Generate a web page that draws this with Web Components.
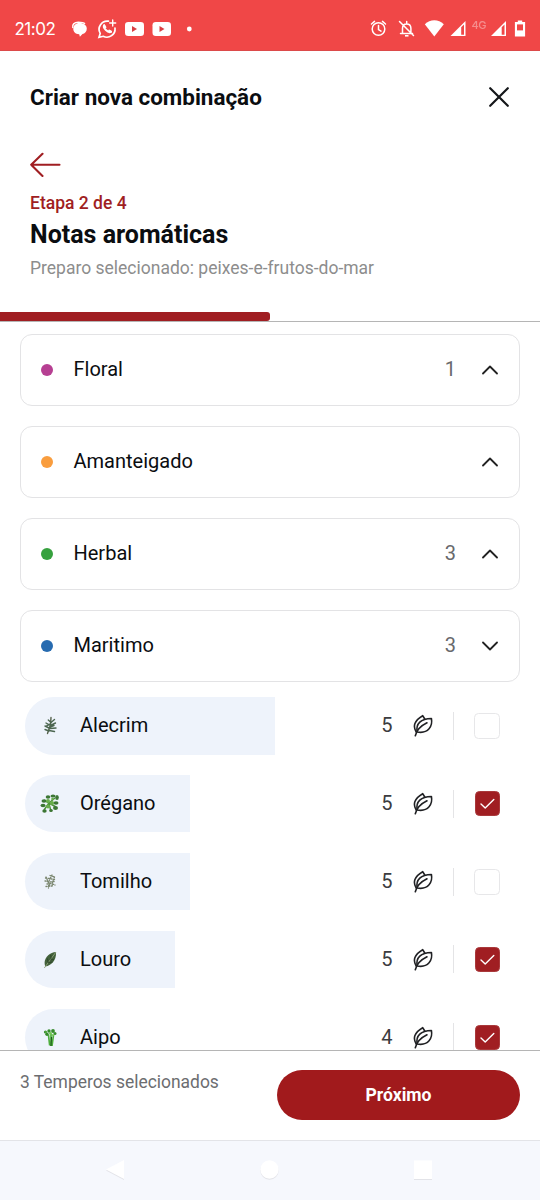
<!DOCTYPE html>
<html lang="pt-BR">
<head>
<meta charset="utf-8">
<title>Criar nova combinação</title>
<style>
html,body{margin:0;height:100%;overflow:hidden;background:#fff;font-family:Roboto,"Liberation Sans",sans-serif;color:#0b0d10}
</style>
</head>
<body>
<combo-app></combo-app>
<script>
const define = (name, html) => customElements.define(name, class extends HTMLElement {
  constructor() {
    super();
    const t = document.createElement('template');
    t.innerHTML = typeof html === 'function' ? html(this) : html;
    this.attachShadow({ mode: 'open' }).append(t.content.cloneNode(true));
  }
});

define('status-bar', `
<style>
:host{display:flex;height:51px;flex:none;box-sizing:border-box;background:#f04747;color:#fff;border-bottom:1px solid #dc4a4a}
svg{display:block;width:540px;height:50px}
.time{font:17px Inter,Roboto,sans-serif;letter-spacing:-.3px}
.net{font:500 11px Inter,Roboto,sans-serif;opacity:.38}
</style>
<svg viewBox="0 0 540 50" fill="#fff">
  <text class="time" x="14.5" y="35" textLength="41">21:02</text>
  <path d="M79.500 23c4.300 0 7.300 2.400 7.300 5.600s-2 5.100-4.300 5.500l-2.600 2.600-.7-2.500c-4-.2-5.900-2.800-5.900-5.300 0-3.400 2.400-5.900 6.200-5.900z"/><path d="M72.800 28c-1-3.400 1.500-5.700 5.500-5.700 3.500 0 5.500.4 6.700 1.500" fill="none" stroke="#fff" stroke-width="1.500"/>
  <g fill="none" stroke="#fff" stroke-width="1.7" stroke-linecap="round">
    <path d="M108.500 21.200a8.200 8.200 0 0 0-8.300 12.200l-1.200 4 4.200-1.100a8.200 8.200 0 0 0 11.800-8.300"/>
    <path d="M112.700 20v6M109.700 23h6" stroke-width="1.400"/>
    <path d="M104.200 25.300c-1.700 2.200 3.900 8.300 6.800 6.400" stroke-width="2"/>
    <path d="M104.200 25.300l1.200 2M109.200 30.500l1.800 1.200" stroke-width="2"/>
  </g>
  <rect x="125" y="22" width="19" height="14" rx="3.300"/><path d="M132 26v6l5-3z" fill="#d93f43"/>
  <rect x="152.500" y="22" width="18.500" height="14" rx="3.300"/><path d="M159.500 26v6l5-3z" fill="#d93f43"/>
  <circle cx="189.300" cy="29" r="2.400"/>
  <g fill="none" stroke="#fff" stroke-width="1.500" stroke-linecap="round">
    <circle cx="378.500" cy="29" r="6.300"/><path d="M378.500 25.500v4l2.500 1.700M371.500 24l3-2.600M385.500 24l-3-2.600"/>
    <path d="M402.500 33.300v-5c0-2.500 1.700-4.400 4.200-4.400s4.200 1.900 4.200 4.400v5M400.500 33.500h12M406.700 21.500v2M399.500 21.500l14 14" />
  </g><path d="M405 35h3.500v1.600H405z"/>
  <path d="M434.300 36.500L424.800 24.200c2.700-2.600 6-3.900 9.500-3.900s6.800 1.300 9.500 3.900z"/>
  <path d="M465.500 21v15H450.500z"/><path d="M461.200 27.300l2.800-2.800V34.700h-2.800z" fill="#f04747"/>
  <text class="net" x="471.500" y="29" textLength="15">4G</text>
  <path d="M506 21v15H491z"/><path d="M501.700 27.300l2.800-2.800V34.700h-2.800z" fill="#f04747"/>
  <path d="M517.800 20.500h4.400V22h2.900v14.500h-10.200V22h2.900z"/><path d="M517 24.400h6v6h-6z" fill="#f04747"/>
</svg>`);

define('combo-header', `
<style>
:host{display:block;flex:none;height:270px;box-sizing:border-box;padding:31px 30px 0}
.top{display:flex;justify-content:space-between;align-items:center;height:30px}
h1,h2,p{margin:0;white-space:nowrap}
h1{font-size:22.450px;line-height:30px;font-weight:700}
.close{margin-right:1px}
svg{display:block;fill:none}
.back{margin:40px 0 0}
.step{margin-top:14px;font-size:17.500px;line-height:22px;font-weight:500;color:#a01e22}
h2{margin-top:5px;font-size:25px;line-height:32px;font-weight:700}
.sub{margin-top:6px;font-size:17.500px;line-height:22px;color:#8d8d8d}
</style>
<div class="top"><h1><slot name="title"></slot></h1>
<svg class="close" width="20" height="20" viewBox="0 0 20 20" stroke="#15171a" stroke-width="2.200" stroke-linecap="round"><path d="M1.200 1.200l17.600 17.600M18.800 1.200L1.200 18.800"/></svg></div>
<svg class="back" width="32" height="26" viewBox="0 0 32 26" stroke="#a01e22" stroke-width="2.100" stroke-linecap="round" stroke-linejoin="round"><path d="M12.500 1.800L1.200 12.700l11.300 11.200M1.200 12.700H29.500"/></svg>
<p class="step"><slot name="step"></slot></p>
<h2><slot name="heading"></slot></h2>
<p class="sub"><slot name="sub"></slot></p>`);

define('step-progress', `
<style>
:host{display:flex;flex:none;margin-top:-10px;height:11px;box-sizing:border-box;border-bottom:1px solid #b5b5b5}
i{width:270px;height:9px;margin-top:1px;background:#a01e22;border-radius:0 3px 3px 0}
</style><i></i>`);

define('note-card', el => `
<style>
:host{display:flex;align-items:center;box-sizing:border-box;height:72px;margin:0 20px 20px;padding:0 21px 0 20px;border:1px solid #e3e3e5;border-radius:12px;background:#fff;font-size:20px}
i{width:12.500px;height:12.500px;border-radius:50%;background:${el.getAttribute('color')};margin:0 20.500px 0 -.5px}
span{flex:1;line-height:24px;margin-top:-2px}
b{font-weight:400;color:#68696c;margin:-2px 26px 0 0}
svg{display:block;fill:none;stroke:#222;stroke-width:1.800;stroke-linecap:round;stroke-linejoin:round}
</style>
<i></i><span><slot></slot></span><b>${el.getAttribute('count') || ''}</b>
<svg width="16" height="10" viewBox="0 0 16 10"><path d="${el.hasAttribute('open') ? 'M1 1.500l7 7 7-7' : 'M1 8.500l7-7 7 7'}"/></svg>`);

const herbs = {
  alecrim: `<g fill="none" stroke="#4c6650" stroke-width="1.400" stroke-linecap="round"><path d="M11 2.500L10.500 10l-3 8.500" stroke="#55604a"/><path d="M11 7.500L8.300 5M11 7.500l3.500-3M10.500 10.500L6 8M10.500 10.500l5-2.500M10 13.500L5 11M10 13.500l6-.5M9 16l-4-1.500M9 15.500l5.500 1M10 12l4-1.500M10.500 9L7 10.500"/></g>`,
  oregano: `<path d="M4 17l5-7 6-5M9 10l7 4M9 11l2 7M4 7l6 4" fill="none" stroke="#4d9139" stroke-width="1.500"/><g fill="#3c7634"><ellipse cx="8" cy="4" rx="2.300" ry="1.700"/><ellipse cx="13" cy="3" rx="2.500" ry="1.600"/><ellipse cx="17" cy="4.500" rx="1.800" ry="2.500"/><ellipse cx="4" cy="8" rx="2.500" ry="1.700"/><ellipse cx="3" cy="12.500" rx="2.500" ry="1.700"/><ellipse cx="16" cy="10" rx="2.500" ry="1.800"/><ellipse cx="15.500" cy="15" rx="2.500" ry="1.900"/><ellipse cx="4.500" cy="18" rx="2.200" ry="1.700"/><ellipse cx="11" cy="17.500" rx="1.800" ry="1.600"/></g><g fill="#68ae4b"><circle cx="8" cy="8" r="2"/><circle cx="12" cy="10" r="2.100"/><circle cx="8" cy="13.500" r="1.900"/><circle cx="12.500" cy="6" r="1.300"/></g>`,
  tomilho: `<g fill="none" stroke="#7a866f" stroke-width="1.300" stroke-dasharray="1.200 1.500" stroke-linecap="round"><path d="M10 4.500l5 1.500M5.500 7l4 .5 5 1M5 10l5 1 5-.5M7 13l4-.5 4 1.500M6 15.500l6-.5"/><path d="M12 4L9 10l-.5 7M14.500 6l-2 5-.5 5M6 6l4 9" stroke-dasharray="1 1.700"/></g>`,
  louro: `<path d="M16 3C10 3.500 5 8 4.600 13c0 2 .2 3 .8 4.400C11 16.500 16.500 12 16 3z" fill="#42603a"/><path d="M16 3L4.300 19" stroke="#8fa37a" stroke-width=".9" fill="none"/><path d="M11 10l-.2-4M8 13.500l-.5-4M10 11l4-.5M8 13.500l4.500-.5" stroke="#253c24" stroke-width=".7" fill="none"/>`,
  aipo: `<path d="M8.500 8l1.200 10.500M11 7v12M13.500 8l-1.500 11" stroke="#4fae3e" stroke-width="1.700" fill="none"/><path d="M11.500 10l-.5 9" stroke="#1e5a1c" stroke-width="1.100" fill="none"/><g fill="#368b2b"><circle cx="5.500" cy="5" r="1.600"/><circle cx="9" cy="4" r="1.700"/><circle cx="13" cy="4" r="1.900"/><circle cx="15" cy="6.500" r="1.500"/><circle cx="7" cy="7.300" r="1.700"/></g><g fill="#72c752"><circle cx="10.500" cy="6.500" r="1.400"/><circle cx="13" cy="8" r="1.100"/><circle cx="6" cy="5" r=".7"/></g>`
};

define('spice-row', el => `
<style>
:host{display:grid;grid-template-columns:330px 1fr;align-items:center;height:57.500px;margin:0 20px 20.400px 25px;font-size:20px}
.bar{display:flex;align-items:center;width:${el.getAttribute('width')}px;height:100%;background:#eef3fb;border-radius:28.750px 0 0 28.750px;white-space:nowrap;overflow:visible}
.bar svg{flex:none;margin:0 20px 0 14.500px}
.bar span{margin-top:-1px}
.end{display:flex;align-items:center;justify-content:flex-end;padding-right:20px}
.n{color:#3b3c40;margin-right:20px;margin-top:-1px}
.sep{width:1px;height:28px;background:#e4e4e6;margin:0 20px 0 19.500px}
.box{width:26px;height:26px;box-sizing:border-box;border:1.300px solid #e7e7e9;border-radius:4.500px}
:host([checked]) .box{background:#a01e22;border:1px solid #a9393b;width:25px;height:25px;margin-left:.6px;margin-right:.4px}
svg{display:block}
.box svg{display:none;margin:4px}
:host([checked]) .box svg{display:block}
</style>
<div class="bar"><svg width="20.500" height="21" viewBox="0 0 20.500 21">${herbs[el.getAttribute('herb')]}</svg><span><slot></slot></span></div>
<div class="end"><span class="n">${el.getAttribute('score')}</span>
<svg width="21" height="23" viewBox="0 0 21 23" fill="none" stroke="#202124" stroke-width="1.600" stroke-linecap="round" stroke-linejoin="round"><path d="M3.200 18C-.3 12.500 1.200 6.500 9.700 1.700L11.800 5"/><path d="M4.200 18C2.600 9.500 8 4.700 18.400 4.500 19.800 12 15.500 20 4.200 18z"/><path d="M2.300 21.700C3.500 16.500 7.500 12 14 8.800"/></svg>
<div class="sep"></div><div class="box"><svg width="15" height="15" viewBox="0 0 15 15" fill="none" stroke="#fff" stroke-width="1.400" stroke-linecap="round" stroke-linejoin="round"><path d="M1 8l4.200 4L13.800 3.500"/></svg></div></div>`);

define('action-footer', `
<style>
:host{display:flex;justify-content:space-between;align-items:flex-start;flex:none;box-sizing:border-box;height:90px;padding:19px 20px 0;border-top:1px solid #b5b5b5;background:#fff}
span{font-size:17.450px;line-height:24px;color:#6c6d70;white-space:nowrap}
button{width:243px;height:50px;border:0;border-radius:25px;background:#a11a1c;color:#fff;font:700 17.600px/50px Roboto,sans-serif;padding:0}
</style>
<span><slot></slot></span><button><slot name="action"></slot></button>`);

define('nav-bar', `
<style>
:host{display:block;flex:none;height:60px;box-sizing:border-box;border-top:1px solid #e3e4e8;background:#f6f8fd}
svg{display:block;filter:drop-shadow(0 1px .6px #e2e3e8)}
</style>
<svg width="540" height="59" viewBox="0 0 540 59" fill="#fff"><path d="M106 28.500L124 19v19z"/><circle cx="269.500" cy="28.500" r="9.200"/><rect x="414" y="19.500" width="18" height="18.500"/></svg>`);

define('combo-app', `
<style>
:host{display:flex;flex-direction:column;width:540px;height:1200px;background:#fff}
.list{flex:1;min-height:0;overflow:hidden;padding-top:12px}
.rows{margin-top:-5px}
</style>
<status-bar></status-bar>
<combo-header><span slot="title">Criar nova combinação</span><span slot="step">Etapa 2 de 4</span><span slot="heading">Notas aromáticas</span><span slot="sub">Preparo selecionado: peixes-e-frutos-do-mar</span></combo-header>
<step-progress></step-progress>
<div class="list">
<note-card color="#b63f92" count="1">Floral</note-card>
<note-card color="#f99d3e">Amanteigado</note-card>
<note-card color="#36a13e" count="3">Herbal</note-card>
<note-card color="#276bb0" count="3" open>Maritimo</note-card>
<div class="rows">
<spice-row herb="alecrim" width="250" score="5">Alecrim</spice-row>
<spice-row herb="oregano" width="165" score="5" checked>Orégano</spice-row>
<spice-row herb="tomilho" width="165" score="5">Tomilho</spice-row>
<spice-row herb="louro" width="150" score="5" checked>Louro</spice-row>
<spice-row herb="aipo" width="85" score="4" checked>Aipo</spice-row>
</div>
</div>
<action-footer>3 Temperos selecionados<span slot="action">Próximo</span></action-footer>
<nav-bar></nav-bar>`);
</script>
</body>
</html>
